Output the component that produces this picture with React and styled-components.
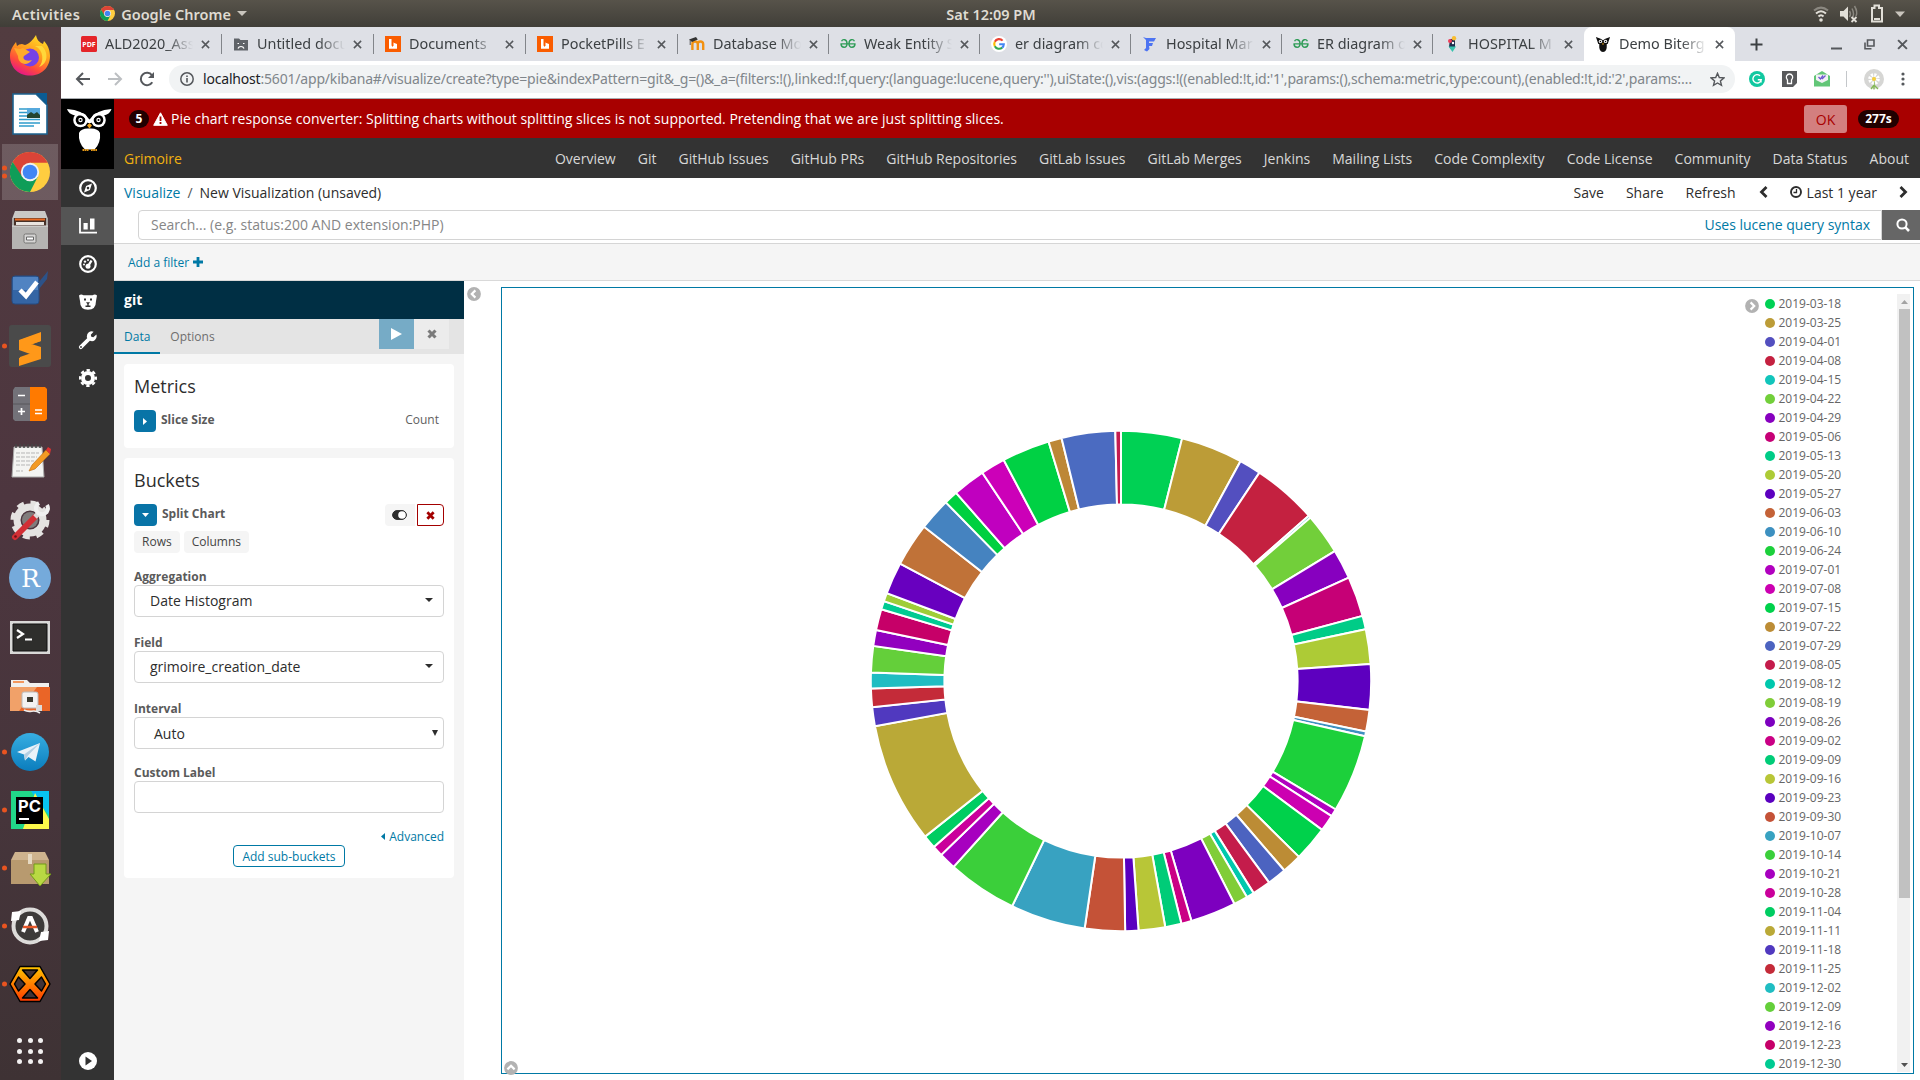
import React from "react";
import styled, { createGlobalStyle } from "styled-components";

const Global = createGlobalStyle`
  * { box-sizing: border-box; }
  body { margin: 0; overflow: hidden; background: #fff; }
  svg { display: block; flex: none; }
`;

const PAGE_FONT = '"Open Sans", "Noto Sans", sans-serif';
const SHELL_FONT = '"Noto Sans", "Open Sans", sans-serif';

/* ---------- desktop shell ---------- */

const Desktop = styled.div`
  width: 1920px; height: 1080px; overflow: hidden;
  display: flex; flex-direction: column;
  font-family: ${PAGE_FONT}; font-size: 14px; color: #2d2d2d;
`;
const TopBar = styled.header`
  flex: none; height: 27px; padding: 0 7px 0 12px;
  display: grid; grid-template-columns: 1fr auto 1fr; align-items: center;
  background: linear-gradient(#57534a, #403e38);
  font: 600 14.5px/26px ${SHELL_FONT}; color: #dfdbd2;
`;
const TopLeft = styled.div`display: flex; align-items: center;`;
const Activities = styled.span`letter-spacing: 0.35px;`;
const AppMenu = styled.div`display: flex; align-items: center; gap: 6px; margin-left: 20px;`;
const TopRight = styled.div`display: flex; align-items: center; justify-content: flex-end;`;
const Clock = styled.div`padding-left: 57px;`;
const Body = styled.div`flex: 1; display: flex; min-height: 0;`;

const Dock = styled.aside`
  width: 61px; flex: none; display: flex; flex-direction: column;
  background: linear-gradient(#523c40, #4d363f 45%, #46353b 75%, #3e3234);
`;
const DockSlot = styled.div`
  height: 58px; flex: none; display: grid; grid-template-columns: 60px; align-items: center; justify-items: center;
  background: ${(p) => (p.$active ? "linear-gradient(rgba(255,255,255,.17), rgba(255,255,255,.17)) 2px 1px / 56px 56px no-repeat" : "none")};
  position: relative;
`;
const Running = styled.span`
  position: absolute; left: 2px; top: 50%; display: flex; flex-direction: column; gap: 3px; transform: translateY(-50%);
  &::before, &::after { content: ""; width: 5px; height: 5px; border-radius: 50%; background: #e95420; }
  &::after { display: ${(p) => (p.$two ? "block" : "none")}; }
`;
const DockGrid = styled.div`
  margin: auto 0 16px 17px; width: 26px; display: grid; grid-template-columns: repeat(3, 5px); gap: 5.5px;
  i { width: 5px; height: 5px; border-radius: 50%; background: #f2f0f0; }
`;

/* ---------- browser chrome ---------- */

const Browser = styled.section`flex: 1; min-width: 0; display: flex; flex-direction: column;`;
const TabStrip = styled.div`
  height: 34px; flex: none; display: flex; align-items: center; padding-left: 9px; background: #dee0e6;
`;
const Tab = styled.div`
  width: ${(p) => p.$w}px; height: 34px; flex: none; padding: 0 0 0 11px; display: flex; align-items: center;
  background: ${(p) => (p.$active ? "#fff" : "transparent")}; border-radius: 8px 8px 0 0;
`;
const TabTitle = styled.span`
  width: 89px; margin: 0 7px 0 8px; white-space: nowrap; color: #3c4043;
  font: 14.4px/20px ${SHELL_FONT};
  mask-image: linear-gradient(90deg, #000 62px, transparent 88px);
`;
const TabSep = styled.i`
  width: 1px; height: 20px; margin-left: auto; background: ${(p) => (p.$on ? "#82858a" : "transparent")};
`;
const WindowButtons = styled.div`margin-left: auto; margin-right: 12px; display: flex; align-items: center; gap: 22px;`;
const NewTab = styled.div`margin-left: 15px;`;
const Toolbar = styled.div`
  height: 38px; flex: none; padding: 0 15px 1px 14px; display: flex; align-items: center; background: #fff; border-bottom: 1px solid #a9adb1;
`;
const NavIcons = styled.div`display: flex; align-items: center; gap: 16px; width: 94px;`;
const Omnibox = styled.div`
  width: 1566px; height: 28px; border-radius: 14px; background: #f1f3f4;
  display: flex; align-items: center; padding: 0 10px 0 11px;
`;
const Url = styled.div`
  flex: 1; margin-left: 9px; white-space: nowrap; overflow: hidden; color: #80868b; font: 14px/20px ${SHELL_FONT};
  letter-spacing: -0.187px;
  b { font-weight: 400; color: #202124; }
`;
const Extensions = styled.div`display: flex; align-items: center; flex: 1; justify-content: space-between; margin-left: 14px;`;
const Bar = styled.i`width: 1px; height: 16px; background: #c4c7ca;`;

/* ---------- kibana ---------- */

const Kibana = styled.main`flex: 1; min-height: 0; display: flex;`;
const Rail = styled.nav`width: 53px; flex: none; display: flex; flex-direction: column; background: #333;`;
const Logo = styled.div`height: 70px; background: #000;`;
const RailItem = styled.div`
  height: 38px; display: grid; place-items: center; background: ${(p) => (p.$active ? "#555" : "transparent")};
`;
const RailFoot = styled.div`margin: auto 0 10px; display: grid; place-items: center;`;
const Page = styled.div`flex: 1; min-width: 0; display: flex; flex-direction: column; background: #fff;`;

const Notice = styled.div`
  height: 39px; flex: none; display: flex; align-items: center; padding: 0 21px 0 15px; background: #a80000; color: #fff;
`;
const Pill = styled.span`
  height: 18px; width: ${(p) => p.$w}px; border-radius: 9px; background: #210000; color: #fff;
  font: 700 12px/18px ${PAGE_FONT}; text-align: center;
`;
const Alert = styled.span`margin-left: 4px;`;
const NoticeText = styled.span`margin: 0 auto 0 3px; line-height: 20px;`;
const OkButton = styled.span`
  width: 43px; height: 28px; margin-right: 11px; border-radius: 3px; background: #d37f7f; color: #a80000; text-align: center; line-height: 29px;
`;
const Menu = styled.div`
  height: 40px; flex: none; display: flex; align-items: center; padding: 1px 11px 0 10px; background: #333; color: #d8d8d8;
`;
const Brand = styled.span`margin-right: auto; color: #f0b010;`;
const MenuItems = styled.div`display: flex; gap: 22.05px;`;
const Crumbs = styled.div`height: 32px; flex: none; padding: 0 11px 4px 10px; display: flex; align-items: center;`;
const Link = styled.span`color: #0079a5;`;
const Slash = styled.span`margin: 0 7px; color: #555;`;
const Actions = styled.div`margin-left: auto; display: flex; align-items: center;`;
const Action = styled.span`margin-right: 22px;`;
const SearchRow = styled.div`height: 34px; flex: none; padding-left: 24px; display: flex; border-bottom: 1px solid #d6d6d6;`;
const SearchBox = styled.div`
  flex: 1; height: 30px; padding: 0 11px 1px 12px; display: flex; align-items: center; justify-content: space-between;
  border: 1px solid #d4d4d4; border-radius: 4px 0 0 4px; color: #868686;
`;
const SearchButton = styled.div`width: 38px; height: 30px; display: grid; place-items: center; background: #666; padding-left: 3px;`;
const FilterBar = styled.div`
  height: 37px; flex: none; padding-left: 14px; display: flex; align-items: center; gap: 4px; background: #f5f5f5;
  border-bottom: 1px solid #d9d9d9; font-size: 12px; color: #0079a5;
`;
const Work = styled.div`flex: 1; min-height: 0; display: flex;`;

const Editor = styled.aside`width: 350px; flex: none; background: #f5f5f5; font-size: 12px;`;
const IndexName = styled.div`height: 38px; padding-left: 10px; background: #002f44; color: #fff; font: 700 14px/37px ${PAGE_FONT};`;
const EditorTabs = styled.div`height: 35px; display: flex; background: #e4e4e4; padding-right: 15px;`;
const EditorTab = styled.div`
  height: 35px; padding: 0 10px; line-height: 35px; color: ${(p) => (p.$active ? "#0079a5" : "#6e6e6e")};
  border-bottom: 2px solid ${(p) => (p.$active ? "#0079a5" : "transparent")};
`;
const TabButton = styled.div`
  width: 35px; height: 30px; display: grid; place-items: center; background: ${(p) => (p.$primary ? "#76abc6" : "#ececec")};
  margin-left: ${(p) => (p.$primary ? "auto" : "0")};
`;
const Card = styled.section`
  margin: 10px 10px 0; height: ${(p) => p.$h}px; padding: 10px 10px 0; background: #fff; border-radius: 4px;
`;
const CardTitle = styled.h2`margin: 0 0 11px; font: 400 18px/25px ${PAGE_FONT}; color: #2d2d2d;`;
const AggRow = styled.div`display: flex; align-items: center; height: 22px; line-height: 16px;`;
const Expander = styled.span`width: ${(p) => p.$w}px; height: 22px; display: grid; place-items: center; border-radius: 4px; background: #0874a7;`;
const AggName = styled.b`margin: 0 auto 0 5px; padding-bottom: 2px; color: #5a5a5a;`;
const AggValue = styled.span`margin-right: 5px; padding-bottom: 2px; color: #5f5f5f;`;
const MiniButton = styled.span`
  width: ${(p) => p.$w}px; height: 22px; display: grid; place-items: center; border-radius: ${(p) => (p.$danger ? "0 4px 4px 0" : "4px 0 0 4px")};
  background: ${(p) => (p.$danger ? "#fff" : "#f5f5f5")}; border: ${(p) => (p.$danger ? "1px solid #a30000" : "0")};
  margin-left: ${(p) => (p.$danger ? "2px" : "0")}; padding-right: ${(p) => (p.$danger ? 0 : 2)}px;
`;
const Chips = styled.div`display: flex; gap: 4px; margin-top: 5px;`;
const Chip = styled.span`height: 22px; padding: 0 8px; border-radius: 4px; background: #f5f5f5; line-height: 21px; color: #444;`;
const FieldLabel = styled.label`display: block; margin-top: ${(p) => p.$top}px; height: 17px; font-weight: 700; line-height: 17px; color: #5a5a5a;`;
const Control = styled.div`
  height: 32px; padding: 0 ${(p) => (p.$native ? 5 : 10)}px ${(p) => (p.$native ? 0 : 2)}px ${(p) => (p.$native ? 19 : 15)}px;
  display: flex; align-items: center; justify-content: space-between; border: 1px solid #d4d4d4; border-radius: 4px; font-size: 14px;
`;
const Advanced = styled.div`height: 18px; margin-top: 14px; display: flex; align-items: center; justify-content: flex-end; gap: 4px; color: #0079a5;`;
const SubButton = styled.div`width: 112px; height: 22px; margin: 0 auto; border: 1px solid #0079a5; border-radius: 4px; color: #0079a5; text-align: center; line-height: 22px;`;

const Gutter = styled.div`width: 37px; flex: none; padding: 6px 0 0 3px;`;
const Canvas = styled.section`
  flex: 1; margin: 6px 6px 6px 0; border: 1px solid #0079a5; display: flex; min-width: 0; position: relative;
`;
const ChartArea = styled.div`flex: 1; min-width: 0; display: flex; align-items: center; justify-content: center; padding: 0 5px 0 0;`;
const SpyToggle = styled.div`position: absolute; left: 2px; bottom: -2px;`;
const LegendToggle = styled.div`width: 14px; margin-top: 11px;`;
const Legend = styled.ul`
  width: 132px; height: 779px; margin: 6px 0 0 6px; padding: 0; list-style: none; font-size: 12px; color: #666;
`;
const LegendRow = styled.li`
  height: 19px; display: flex; align-items: center; gap: 3.5px; line-height: 19px;
  &::before { content: ""; width: 10px; height: 10px; border-radius: 50%; background: ${(p) => p.$color}; }
`;
const Scrollbar = styled.div`width: 13px; height: 778px; margin: 6px 3px 0 0; background: #f1f1f1; display: flex; flex-direction: column; align-items: center;`;
const Thumb = styled.div`width: 11px; margin: 0 0 0 2px; height: 589px; background: #c1c1c1;`;
const ScrollArrow = styled.div`height: 15px; display: grid; place-items: center; margin-top: ${(p) => (p.$end ? "auto" : 0)}; padding-left: 2px;`;

/* ---------- data ---------- */

const LEGEND = [
  ["2019-03-18", "#00d154"], ["2019-03-25", "#bc9c37"], ["2019-04-01", "#534fbf"], ["2019-04-08", "#c42140"],
  ["2019-04-15", "#12c5bb"], ["2019-04-22", "#72cf3a"], ["2019-04-29", "#8700bf"], ["2019-05-06", "#c60076"],
  ["2019-05-13", "#00cc87"], ["2019-05-20", "#adcb36"], ["2019-05-27", "#5d00bf"], ["2019-06-03", "#c46237"],
  ["2019-06-10", "#3d90c0"], ["2019-06-24", "#1cd03b"], ["2019-07-01", "#b100bf"], ["2019-07-08", "#cc00b1"],
  ["2019-07-15", "#00d14b"], ["2019-07-22", "#bc8c35"], ["2019-07-29", "#4c63c0"], ["2019-08-05", "#c41c4b"],
  ["2019-08-12", "#00c8ad"], ["2019-08-19", "#80cd38"], ["2019-08-26", "#7d00bf"], ["2019-09-02", "#ca0085"],
  ["2019-09-09", "#00cc78"], ["2019-09-16", "#b8c637"], ["2019-09-23", "#5a00bf"], ["2019-09-30", "#c45237"],
  ["2019-10-07", "#38a2c1"], ["2019-10-14", "#3bcf3a"], ["2019-10-21", "#a700bf"], ["2019-10-28", "#ca009b"],
  ["2019-11-04", "#00cd62"], ["2019-11-11", "#baa937"], ["2019-11-18", "#5039bf"], ["2019-11-25", "#c42b39"],
  ["2019-12-02", "#20bdc2"], ["2019-12-09", "#64cf3a"], ["2019-12-16", "#9200bf"], ["2019-12-23", "#c60068"],
  ["2019-12-30", "#00cb92"],
];
const LATER_COLORS = ["#9fcd38", "#6800bf", "#c07238", "#4583c0", "#00d03f", "#c000bf", "#cc00b8", "#00d144", "#bd8737", "#4b6bc1", "#c41c50"];
const SLICE_ENDS = [
  14.14, 28.53, 33.59, 48.64, 49.23, 58.71, 65.58, 74.91, 78.07, 86.12, 96.64, 101.67, 102.78, 120.9, 122.7, 126.51,
  134.67, 139.24, 143.7, 147.98, 149.77, 153.04, 163.65, 166.03, 169.8, 175.98, 179.04, 188.36, 205.8, 222, 225.95,
  228.44, 231.54, 259.6, 264, 268.28, 271.95, 278.07, 281.78, 286.66, 288.62, 290.57, 298, 308.08, 315.57, 318.77,
  326.35, 332.05, 343.17, 346.25, 358.7, 360,
];
const COLORS = [...LEGEND.map((l) => l[1]), ...LATER_COLORS];
const MENU = ["Overview", "Git", "GitHub Issues", "GitHub PRs", "GitHub Repositories", "GitLab Issues", "GitLab Merges", "Jenkins", "Mailing Lists", "Code Complexity", "Code License", "Community", "Data Status", "About"];

function Donut({ outer = 250.2, inner = 176.6 }) {
  const at = (deg, r) => {
    const a = (deg * Math.PI) / 180;
    return `${(Math.sin(a) * r).toFixed(2)} ${(-Math.cos(a) * r).toFixed(2)}`;
  };
  return (
    <svg width="502" height="502" viewBox="-251 -251 502 502">
      {SLICE_ENDS.map((end, i) => {
        const start = i ? SLICE_ENDS[i - 1] : 0;
        return (
          <path key={end} fill={COLORS[i]} stroke="#fff" strokeWidth="2"
            d={`M${at(start, outer)}A${outer} ${outer} 0 0 1 ${at(end, outer)}L${at(end, inner)}A${inner} ${inner} 0 0 0 ${at(start, inner)}Z`} />
        );
      })}
    </svg>
  );
}

/* ---------- icons ---------- */

const Chrome = ({ s }) => (
  <svg width={s} height={s} viewBox="0 0 48 48">
    <circle cx="24" cy="24" r="24" fill="#ffcd40" />
    <path d="M24 13H45.300A24 24 0 0 0 3.200 12L14 31Z" fill="#db4437" />
    <path d="M3.200 12 14.500 29.500 24 35 33.500 29.500 24 48A24 24 0 0 1 3.200 12Z" fill="#0f9d58" />
    <circle cx="24" cy="24" r="11" fill="#f1f1f1" /><circle cx="24" cy="24" r="8.800" fill="#4285f4" />
  </svg>
);
const Cross = ({ s = 9, c = "#55585c", w = 1.7 }) => (
  <svg width={s} height={s} viewBox="0 0 10 10"><path d="M1 1 9 9M9 1 1 9" stroke={c} strokeWidth={w} fill="none" /></svg>
);
const FatCross = ({ s, c }) => (
  <svg width={s} height={s} viewBox="0 0 10 10"><path d="M1.500 1.500 8.500 8.500M8.500 1.500 1.500 8.500" stroke={c} strokeWidth="3.100" fill="none" /></svg>
);
const Caret = ({ d = "down", w = 8, h = 4, c = "#2d2d2d" }) => (
  <svg width={w} height={h} viewBox="0 0 10 10" preserveAspectRatio="none">
    <path fill={c} d={{ down: "M0 0H10L5 10Z", up: "M0 10H10L5 0Z", left: "M10 0V10L0 5Z", right: "M0 0V10L10 5Z" }[d]} />
  </svg>
);
const CircleArrow = ({ turn = 0 }) => (
  <svg width="14" height="14" viewBox="0 0 14 14">
    <circle cx="7" cy="7" r="6.900" fill="#b2b2b2" />
    <path d="M8.400 3.400 4.800 7 8.400 10.600" transform={`rotate(${turn} 7 7)`} stroke="#fff" strokeWidth="2.200" fill="none" />
  </svg>
);
const Geeks = () => (
  <svg width="16" height="16" viewBox="0 0 16 16" fill="none" stroke="#2f9c57" strokeWidth="1.400">
    <path d="M.4 7.900H15.600M1.600 5.200C2.600 2.800 7 3.100 7 7.400 7 12.600 1.200 12.200 1 7.900M14.400 5.200C13.400 2.800 9 3.100 9 7.400 9 12.600 14.800 12.200 15 7.900" />
  </svg>
);
const Lucid = () => (
  <svg width="16" height="16" viewBox="0 0 16 16"><path fill="#fa5d00" d="M0 0H16V16H0Z" /><path fill="#fff" d="M4 3H6.500V9.500L8 11V6.500L12 8V12.800H4Z" /><path d="M8 6.500V10" stroke="#fa5d00" /></svg>
);
const TAB_ICONS = {
  pdf: <svg width="16" height="16" viewBox="0 0 16 16"><rect width="16" height="16" rx="1.500" fill="#e5252a" /><text x="8" y="10.600" fontSize="7" fontWeight="700" fill="#fff" textAnchor="middle" fontFamily="Open Sans">PDF</text></svg>,
  sad: <svg width="16" height="16" viewBox="0 0 16 16"><path d="M1 2.500H6L7.500 4H15V14.500H1Z" fill="#5f6368" /><path d="M4.500 7.500H6M10 7.500H11.500M5 12.500C6 9.800 10 9.800 11 12.500" stroke="#fff" strokeWidth="1.200" fill="none" /></svg>,
  lucid: <Lucid />,
  moodle: <svg width="16" height="16" viewBox="0 0 16 16"><path d="M3.400 14V8Q3.400 5.500 6 5.500T8.800 8V14M8.800 8Q8.800 5.500 11.400 5.500T14.200 8V14" stroke="#f29111" strokeWidth="2.400" fill="none" /><path d="M0 3.500 7 1 8.800 3.500 3 6Z" fill="#333" /><path d="M1.200 4V9" stroke="#555" /></svg>,
  geeks: <Geeks />,
  google: <svg width="16" height="16" viewBox="0 0 16 16"><circle cx="8" cy="8" r="8" fill="#fff" /><g fill="none" strokeWidth="2.100"><path d="M11.600 4.600A4.800 4.800 0 0 0 3.800 5.800" stroke="#ea4335" /><path d="M3.800 5.800A4.800 4.800 0 0 0 3.800 10.200" stroke="#fbbc05" /><path d="M3.800 10.200A4.800 4.800 0 0 0 11.200 11.600" stroke="#34a853" /><path d="M11.200 11.600A4.800 4.800 0 0 0 12.800 8.200H8.200" stroke="#4285f4" /></g></svg>,
  freelance: <svg width="16" height="16" viewBox="0 0 16 16"><path d="M1 1 4 2H14L12 5.500H7V7H11L10 10H7L7.500 13 5 15.500 2 14 4 12V4Z" fill="#4d74f2" /></svg>,
  rocket: <svg width="16" height="16" viewBox="0 0 16 16"><path d="M6 3H11V11L8.500 14 5 11Z" fill="#1d2c4d" /><circle cx="10" cy="2.200" r="2.200" fill="#f9bd30" /><circle cx="6" cy="5" r="2" fill="#ee3c57" /><path d="M4.500 10.500H12L8.500 16Z" fill="#37c3ad" /><circle cx="9" cy="7" r="1.200" fill="#fff" /></svg>,
  owl: <svg width="16" height="17" viewBox="0 0 17 17"><path d="M1 .5 6 2.500 8.500 4 11 2.500 16 .5 13.500 8H3.500Z" fill="#111" /><path d="M4.500 8H12.500Q13 16.500 8.500 16.500T4.500 8Z" fill="#111" /><circle cx="5.800" cy="5.200" r="1.800" fill="#fff" /><circle cx="11.200" cy="5.200" r="1.800" fill="#fff" /><circle cx="5.800" cy="5.200" r=".8" /><circle cx="11.200" cy="5.200" r=".8" /><path d="M8.500 6.500 9.500 8.500H7.500Z" fill="#f0a818" /></svg>,
};
const TABS = [
  ["pdf", "ALD2020_Ass"], ["sad", "Untitled docu"], ["lucid", "Documents"], ["lucid", "PocketPills E"], ["moodle", "Database Mo"],
  ["geeks", "Weak Entity S"], ["google", "er diagram co"], ["freelance", "Hospital Mar"], ["geeks", "ER diagram o"], ["rocket", "HOSPITAL M"], ["owl", "Demo Biterg"],
];

const D = ({ children, w = 42, h = 42 }) => <svg width={w} height={h} viewBox={`0 0 ${w} ${h}`}>{children}</svg>;
const DOCK = [
  { icon: <D w={40} h={42}><defs><linearGradient id="fx" x1=".8" y1="0" x2=".3" y2="1"><stop offset="0" stopColor="#ffe226" /><stop offset=".45" stopColor="#ff9a1e" /><stop offset=".75" stopColor="#ff4a3c" /><stop offset="1" stopColor="#e3148c" /></linearGradient></defs>
    <path fill="url(#fx)" d="M26 0C27 5 29 7 33 9L34 6C39 11 40 17 40 21 40 33 31 40.500 20 40.500 9 40.500 0 33 0 21 0 15 3 11 6 7L7 11Q9 9 12 9L15 10C19 9 23 5 26 0Z" /><circle cx="20" cy="22.500" r="9" fill="#7542e5" /><path d="M4 13 10 14 13 13 20 17 14 21C12 24 16 27 22 25 17 32 8 29 8 21Z" fill="#ffab2b" /><path d="M25 11C34 15 34 27 29 32 39 28 38 17 32 11Z" fill="#ffd83a" /></D> },
  { icon: <D><path d="M4 1H27L38 12V41H4Z" fill="#fff" stroke="#1c6390" strokeWidth="1.600" /><path d="M27 0H38V12Z" fill="#0b5c93" /><path d="M10 16H18M10 19.500H18M10 23H18M10 26.500H31M10 30H31M10 33H25" stroke="#2f9ccb" strokeWidth="1.600" /><path d="M18 15H31V25H18Z" fill="#56a9dd" /><path d="M18 25V22L22 19 25 21 28 19 31 22V25Z" fill="#23442e" /></D> },
  { icon: <Chrome s={40} />, active: true, run: 2 },
  { icon: <D><path d="M6 2H36L39 10H3Z" fill="#c9c8c6" /><path d="M3 9H39V40H3Z" fill="#aaa9a7" /><path d="M5 9H37V18H5Z" fill="#463128" /><path d="M6 10.500H36" stroke="#eb6c26" strokeWidth="2" /><path d="M7 14.500H35" stroke="#e9e4df" strokeWidth="3" /><path d="M3 17H39V40H3Z" fill="#b5b4b2" /><path d="M3 17H39" stroke="#dedddc" /><rect x="15" y="25" width="12" height="9" rx="1.500" fill="#d6d5d4" stroke="#757472" /><path d="M17.500 28H24.500V31H17.500Z" fill="#fff" stroke="#666" /></D> },
  { icon: <D><rect x="3" y="9" width="27" height="28" rx="3" fill="#3465a4" stroke="#254d83" /><path d="M4 10H29V23H4Z" fill="#5083c2" /><path d="M29 16 39 4 38 12 30 22Z" fill="#2c5288" /><path d="M11 23 17 29 28 15" stroke="#fff" strokeWidth="4.500" fill="none" /></D> },
  { icon: <D><rect width="42" height="42" rx="3" fill="#4a4a4a" /><path d="M11 15 32 8V16L20 20.500 32 25V33L11 35V32L24 27.500 11 23.500Z" fill="#ff9819" /><path d="M10 15 32 7V16L10 23ZM10 23 32 29V34L24 30 10 25ZM10 33 32 26V34L10 41ZM10 15 32 22V29L10 23Z" fill="#ff9819" /></D>, run: 1 },
  { icon: <D><path d="M4 7 6 4H21V38H6L4 36Z" fill="#737279" /><path d="M21 4H36L38 6V36L36 38H21Z" fill="#ff7a00" /><path d="M4 21H21" stroke="#58575c" /><path d="M9 12.500H16M9 28.500H16M12.500 25V32M26 27H33M26 30.500H33" stroke="#fff" strokeWidth="1.700" /></D> },
  { icon: <D><path d="M5 6H33L35 36H3Z" fill="#f4f4f2" stroke="#aaa" /><path d="M7 7V3M11 7V3M15 7V3M19 7V3M23 7V3M27 7V3M31 7V3" stroke="#444" strokeWidth="1.500" /><path d="M7 12H30M7 16H28M7 20H25M7 24H22M7 30H14" stroke="#b5b5b5" strokeDasharray="4 1" /><path d="M20 30 23 24 37 9 41 13 26 28Z" fill="#f39a24" stroke="#b86a12" strokeWidth=".6" /><path d="M37 9 39 6 42 8 41 13Z" fill="#d33" /></D> },
  { icon: <D><circle cx="21" cy="21" r="13" fill="none" stroke="#e4e3e1" strokeWidth="7" /><circle cx="21" cy="21" r="17.500" fill="none" stroke="#e4e3e1" strokeWidth="4" strokeDasharray="7 6.740" /><circle cx="21" cy="21" r="8" fill="#807c7c" /><path d="M6 38 26 18" stroke="#d22f35" strokeWidth="6" strokeLinecap="round" /><path d="M26 18 30 14" stroke="#ddd" strokeWidth="5" /><path d="M38 6A6 6 0 1 1 30 4" fill="none" stroke="#f0f0f0" strokeWidth="4" /><circle cx="6.500" cy="37.500" r="1.300" fill="#701015" /></D> },
  { icon: <D><circle cx="21" cy="21" r="21" fill="#75aadb" /><text x="21.500" y="29.500" fontFamily="DejaVu Serif, Liberation Serif" fontSize="25" fill="#fff" textAnchor="middle">R</text></D> },
  { icon: <D h={40}><path d="M1 5H41V38H1Z" fill="#d9d9d8" /><path d="M4 8H38V35H4Z" fill="#2e2e2c" stroke="#111" /><path d="M8 14 14 18 8 22M16 23.500H23" stroke="#fff" strokeWidth="2.200" fill="none" /></D> },
  { icon: <D h={40}><path d="M2 6H18L21 9H40V16H2Z" fill="#f1f0ee" /><path d="M4 8H15" stroke="#f37a2c" strokeWidth="1.500" /><path d="M1 13H41V37H1Z" fill="#ea6527" /><path d="M1 13H28L10 37H1Z" fill="#f1a169" /><rect x="13" y="18" width="16" height="16" rx="2" fill="#f3f2f1" stroke="#bbb" /><path d="M18 23H24V28H18Z" fill="#3b3a30" /><path d="M15 36C22 40 24 34 31 39" stroke="#eee" fill="none" strokeWidth="1.600" /><path d="M27 31H33V37H27Z" fill="#dcdcdc" /></D> },
  { icon: <D w={38} h={38}><defs><linearGradient id="tg" x2="0" y2="1"><stop stopColor="#37aee2" /><stop offset="1" stopColor="#0b7dbd" /></linearGradient></defs><circle cx="19" cy="19" r="19" fill="url(#tg)" /><path d="M6 19 29 10 24.500 28.500 17.500 24 14 27.500 13 21.500Z" fill="#e9f2f9" /><path d="M13 21.500 29 10 17 22.500 14 27.500Z" fill="#b4cfe2" /></D>, run: 1 },
  { icon: <D w={38} h={38}><path d="M0 0H38V38H0Z" fill="#21d789" /><path d="M20 0H38V24L26 10Z" fill="#07c3f2" /><path d="M12 38 24 2 38 28V38Z" fill="#fcf84a" /><path d="M5 6H32V33H5Z" fill="#000" /><text x="18.500" y="21" fontSize="16.500" fontWeight="700" fill="#fff" fontFamily="Inter, Open Sans" textAnchor="middle">PC</text><path d="M8 28H18" stroke="#fff" strokeWidth="2" /></D>, run: 1 },
  { icon: <D h={40}><path d="M6 4H36L40 12H2Z" fill="#ceb38e" /><path d="M2 12H40V36H2Z" fill="#b89a6f" /><path d="M19 6H23V16H19Z" fill="#e6d9c2" /><path d="M25 16H37V26H42L31 38 21 26H25Z" fill="#b9d943" stroke="#739b18" /></D>, run: 1 },
  { icon: <D><circle cx="21" cy="21" r="16.500" fill="#3d3b3a" stroke="#dddcda" strokeWidth="4" /><path d="M3 7 12 6 10 15 2 16ZM39 35 30 36 32 27 40 26Z" fill="#fff" /><path d="M14 27 20 13H22L28 27" stroke="#fff" strokeWidth="4" fill="none" /><path d="M14 22H28" stroke="#e7582a" strokeWidth="2.500" /></D>, run: 1 },
  { icon: <D><defs><linearGradient id="hx" x2="0" y2="1"><stop stopColor="#ffc500" /><stop offset="1" stopColor="#ff3a00" /></linearGradient></defs><path fillRule="evenodd" d="M11 3.500H31L41 21 31 38.500H11L1 21ZM13.500 7 21 15.500 28.500 7ZM13.500 35 21 26.500 28.500 35ZM5.500 21 9.500 14 16 21 9.500 28ZM36.500 21 32.500 14 26 21 32.500 28Z" fill="url(#hx)" stroke="#000" strokeWidth="1.500" strokeLinejoin="round" /></D>, run: 1 },
];

const RAIL = [
  <svg width="18" height="18" viewBox="0 0 18 18"><circle cx="9" cy="9" r="7.800" fill="none" stroke="#fff" strokeWidth="2.200" /><path fillRule="evenodd" d="M13 4.500 10.900 11 5 13.500 7.100 7ZM9 7.800A1.300 1.300 0 1 0 9 10.400 1.300 1.300 0 0 0 9 7.800Z" fill="#fff" /></svg>,
  <svg width="18" height="18" viewBox="0 0 18 18"><path d="M1 1V15.700H18" stroke="#fff" strokeWidth="1.800" fill="none" /><path d="M4.500 6H8.700V12.500H4.500ZM11 1.500H15.500V12.500H11Z" fill="#fff" /></svg>,
  <svg width="18" height="18" viewBox="0 0 18 18"><circle cx="9" cy="9" r="7.800" fill="none" stroke="#fff" strokeWidth="2.200" /><circle cx="9" cy="11.200" r="2.500" fill="#fff" /><path d="M9.500 10.500 12.500 5.500" stroke="#fff" strokeWidth="2.400" /><circle cx="6" cy="6.600" r="1.200" fill="#fff" /><circle cx="9" cy="5" r="1" fill="#fff" /><circle cx="5" cy="9.600" r="1" fill="#fff" /></svg>,
  <svg width="18" height="16" viewBox="0 0 18 16"><path fill="#fff" d="M0 1.500Q2-.3 4.500 1.300H13.500Q16-.3 18 1.500L17 7Q17 15.800 9 15.800T1 7Z" /><path d="M5 4.600H7V6.500H5ZM11 4.600H13V6.500H11ZM7 8.300H11L9.700 10V11.500H11.500V13H6.500V11.500H8.300V10Z" fill="#333" /></svg>,
  <svg width="19" height="19" viewBox="0 0 19 19"><path d="M2.800 16.200 11.500 7.500" stroke="#fff" strokeWidth="3.800" strokeLinecap="round" /><path fill="#fff" d="M15.600.7 12.800 3.700 13.300 5.700 15.300 6.200 18.400 3.500Q19.300 7 17 9T12 9.800L8.900 6.600Q8.500 3 10.800 1.300T15.600.7Z" /><circle cx="3" cy="16" r=".9" fill="#333" /></svg>,
  <svg width="18" height="18" viewBox="0 0 18 18"><circle cx="9" cy="9" r="5" fill="none" stroke="#fff" strokeWidth="4" /><circle cx="9" cy="9" r="7.900" fill="none" stroke="#fff" strokeWidth="2.200" strokeDasharray="3.400 2.800" strokeDashoffset="1.700" /></svg>,
];

const Owl = () => (
  <svg width="53" height="70" viewBox="0 0 53 70">
    <path fill="#fff" d="M18 34Q20 29 28.500 29.500 37 29 39 34 40 44 33.500 50.500H24Q17 44 18 34Z" />
    <circle cx="19.500" cy="21" r="7.300" fill="#fff" /><circle cx="37.500" cy="21" r="7.300" fill="#fff" />
    <circle cx="19.500" cy="21" r="4.800" fill="#000" /><circle cx="37.500" cy="21" r="4.800" fill="#000" />
    <circle cx="19.500" cy="21" r="2.200" fill="#fff" /><circle cx="37.500" cy="21" r="2.200" fill="#fff" />
    <circle cx="19.500" cy="21" r="1" fill="#000" /><circle cx="37.500" cy="21" r="1" fill="#000" />
    <path fill="#fff" d="M6 10Q22 11 28.500 20.500 35 11 50.500 10 49 15 43 16.500 34 14 30.500 24H26.500Q23 14 14 16.500 7.500 15 6 10Z" />
    <path fill="#f0a21c" d="M28.500 24 31 26.500 28.500 29.500 26 26.500Z" />
    <path stroke="#e79a16" strokeWidth="2" strokeDasharray="1.700 .5" d="M21.500 51H27.500M30 51H36" />
  </svg>
);

export default function App() {
  return (
    <Desktop>
      <Global />
      <TopBar>
        <TopLeft>
          <Activities>Activities</Activities>
          <AppMenu><Chrome s={15} /><span>Google Chrome</span><Caret w={10} h={5} c="#c9c5bd" /></AppMenu>
        </TopLeft>
        <Clock>Sat 12:09 PM</Clock>
        <TopRight>
          <svg width="100" height="20" viewBox="0 0 100 20" fill="none" stroke="#e2dfd8">
            <path d="M1 6.500Q8 .8 15 6.500" stroke="#8b8880" strokeWidth="2" /><path d="M3 9.500Q8 5 13 9.500M5.500 12.500Q8 9.800 10.500 12.500" strokeWidth="2" /><circle cx="8" cy="16" r="1.800" fill="#e2dfd8" stroke="none" />
            <path d="M27 7H30.500L35 2.500V17L30.500 12.500H27Z" fill="#e2dfd8" stroke="none" /><path d="M36.500 7Q38.500 10 36.500 13M39 4.500Q42 10 39 14.500M41.500 2Q45 8 43 12" stroke="#8b8880" strokeWidth="1.500" /><path d="M38.500 13 43.500 18M43.500 13 38.500 18" strokeWidth="1.800" />
            <path d="M59 4H61.500V1.500H66V4H69V17.500H59Z" strokeWidth="2" /><path d="M61 15H67" strokeWidth="2" />
            <path d="M82 7.500H92L87 13Z" fill="#c9c5bd" stroke="none" />
          </svg>
        </TopRight>
      </TopBar>
      <Body>
        <Dock>
          {DOCK.map((d, i) => (
            <DockSlot key={i} $active={d.active}>{d.icon}{d.run && <Running $two={d.run === 2} />}</DockSlot>
          ))}
          <DockGrid>{Array.from({ length: 9 }, (_, i) => <i key={i} />)}</DockGrid>
        </Dock>
        <Browser>
          <TabStrip>
            {TABS.map(([icon, title], i) => (
              <Tab key={title} $w={i < 4 ? 152 : 151} $active={i === 10}>
                {TAB_ICONS[icon]}<TabTitle>{title}</TabTitle><Cross /><TabSep $on={i < 9} />
              </Tab>
            ))}
            <NewTab><svg width="13" height="13" viewBox="0 0 13 13"><path d="M6.500 .5V12.500M.5 6.500H12.500" stroke="#3c4043" strokeWidth="2" /></svg></NewTab>
            <WindowButtons>
              <svg width="11" height="12" viewBox="0 0 11 12"><path d="M0 10.500H11" stroke="#55585c" strokeWidth="2" /></svg>
              <svg width="11" height="11" viewBox="0 0 11 11" fill="none" stroke="#55585c" strokeWidth="1.600"><path d="M3.500 1H10V7H3.500ZM1 3.500V9.800H7.500" /></svg>
              <Cross s={11} w={1.8} />
            </WindowButtons>
          </TabStrip>
          <Toolbar>
            <NavIcons>
              <svg width="16" height="16" viewBox="0 0 16 16" fill="none" stroke="#55585c" strokeWidth="2"><path d="M15 8H2.500M8 2 2 8 8 14" /></svg>
              <svg width="16" height="16" viewBox="0 0 16 16" fill="none" stroke="#bcbfc2" strokeWidth="2"><path d="M1 8H13.500M8 2 14 8 8 14" /></svg>
              <svg width="16" height="16" viewBox="0 0 16 16"><path d="M13.300 11.300A6.200 6.200 0 1 1 13 4.300" fill="none" stroke="#55585c" strokeWidth="2" /><path d="M15 1V7H9Z" fill="#55585c" /></svg>
            </NavIcons>
            <Omnibox>
              <svg width="14" height="14" viewBox="0 0 14 14"><circle cx="7" cy="7" r="6.200" fill="none" stroke="#55585c" strokeWidth="1.500" /><path d="M7 6V10.500M7 3.500V5" stroke="#55585c" strokeWidth="1.600" /></svg>
              <Url><b>localhost</b>{":5601/app/kibana#/visualize/create?type=pie&indexPattern=git&_g=()&_a=(filters:!(),linked:!f,query:(language:lucene,query:''),uiState:(),vis:(aggs:!((enabled:!t,id:'1',params:(),schema:metric,type:count),(enabled:!t,id:'2',params:…"}</Url>
              <svg width="15" height="15" viewBox="0 0 15 15"><path d="M7.500 1.300 9.300 5.500 13.900 5.900 10.400 8.900 11.500 13.400 7.500 11 3.500 13.400 4.600 8.900 1.100 5.900 5.700 5.500Z" fill="none" stroke="#55585c" strokeWidth="1.400" /></svg>
            </Omnibox>
            <Extensions>
              <svg width="16" height="16" viewBox="0 0 16 16"><circle cx="8" cy="8" r="8" fill="#11c8a0" /><path d="M11 4.800A4.200 4.200 0 1 0 12.200 8.800H8.800M12 9V11.500" fill="none" stroke="#fff" strokeWidth="1.400" /></svg>
              <svg width="15" height="16" viewBox="0 0 15 16"><path d="M0 0H15V12L11 16H0Z" fill="#58595b" /><path d="M5.500 9Q3.800 7 4.500 5 5.500 3 7.500 3T10.500 5Q11.200 7 9.500 9V12.500H5.500Z" fill="none" stroke="#fff" strokeWidth="1.300" /></svg>
              <svg width="16" height="16" viewBox="0 0 16 16"><path d="M0 5 8 0 16 5V15.500H0Z" fill="#62c677" /><path d="M2 3.500H14V9L8 12 2 9Z" fill="#f1f1f4" /><path d="M4.500 6 6.500 8 9 4.500M8 8 11.500 4.500" stroke="#6b58cf" fill="none" strokeWidth="1.300" /></svg>
              <Bar />
              <svg width="20" height="22" viewBox="0 0 20 22"><circle cx="10" cy="11" r="10" fill="#d6d6d4" /><path d="M10 13V21.500M7 21 10 17 14 21" stroke="#84b956" strokeWidth="1.300" fill="none" /><circle cx="10" cy="11" r="4" fill="none" stroke="#fff" strokeWidth="3.600" strokeDasharray="2 1.100" /><circle cx="10" cy="11" r="2" fill="#f5cf3a" /></svg>
              <svg width="4" height="16" viewBox="0 0 4 16" fill="#55585c"><circle cx="2" cy="3" r="1.600" /><circle cx="2" cy="8" r="1.600" /><circle cx="2" cy="13" r="1.600" /></svg>
            </Extensions>
          </Toolbar>
          <Kibana>
            <Rail>
              <Logo><Owl /></Logo>
              {RAIL.map((icon, i) => <RailItem key={i} $active={i === 1}>{icon}</RailItem>)}
              <RailFoot><svg width="18" height="18" viewBox="0 0 18 18"><circle cx="9" cy="9" r="9" fill="#fff" /><path d="M6.500 4.500 13 9 6.500 13.500Z" fill="#333" /></svg></RailFoot>
            </Rail>
            <Page>
              <Notice>
                <Pill $w={20}>5</Pill>
                <Alert><svg width="15" height="14" viewBox="0 0 15 14"><path d="M7.500 .8 14.300 13.300H.7Z" fill="#fff" stroke="#fff" strokeLinejoin="round" /><path d="M7.500 4.500V9M7.500 10V12" stroke="#a80000" strokeWidth="1.800" /></svg></Alert>
                <NoticeText>Pie chart response converter: Splitting charts without splitting slices is not supported. Pretending that we are just splitting slices.</NoticeText>
                <OkButton>OK</OkButton><Pill $w={41}>277s</Pill>
              </Notice>
              <Menu><Brand>Grimoire</Brand><MenuItems>{MENU.map((m) => <span key={m}>{m}</span>)}</MenuItems></Menu>
              <Crumbs>
                <Link>Visualize</Link><Slash>/</Slash><span>New Visualization (unsaved)</span>
                <Actions>
                  <Action>Save</Action><Action>Share</Action><Action>Refresh</Action>
                  <svg width="49" height="14" viewBox="0 0 49 14" fill="none" stroke="#2d2d2d"><path d="M8.500 2 3.500 7 8.500 12" strokeWidth="2.800" /><circle cx="38" cy="7" r="5" strokeWidth="1.900" /><path d="M38.500 4V7.500H35.500" strokeWidth="1.300" /></svg>
                  <span>Last 1 year</span>
                  <svg width="32" height="14" viewBox="0 0 32 14" fill="none" stroke="#2d2d2d"><path d="M23.500 2 28.500 7 23.500 12" strokeWidth="2.800" /></svg>
                </Actions>
              </Crumbs>
              <SearchRow>
                <SearchBox><span>Search... (e.g. status:200 AND extension:PHP)</span><Link>Uses lucene query syntax</Link></SearchBox>
                <SearchButton><svg width="14" height="14" viewBox="0 0 14 14" fill="none" stroke="#fff"><circle cx="6" cy="6" r="4.600" strokeWidth="2" /><path d="M9.200 9.200 13 13" strokeWidth="2.600" /></svg></SearchButton>
              </SearchRow>
              <FilterBar>Add a filter<svg width="10" height="10" viewBox="0 0 10 10"><path d="M5 0V10M0 5H10" stroke="#0079a5" strokeWidth="2.800" /></svg></FilterBar>
              <Work>
                <Editor>
                  <IndexName>git</IndexName>
                  <EditorTabs>
                    <EditorTab $active>Data</EditorTab><EditorTab>Options</EditorTab>
                    <TabButton $primary><Caret d="right" w={11} h={12} c="#fff" /></TabButton>
                    <TabButton><FatCross s={10} c="#7b7b7b" /></TabButton>
                  </EditorTabs>
                  <Card $h={84}>
                    <CardTitle>Metrics</CardTitle>
                    <AggRow><Expander $w={22}><Caret d="right" w={4} h={7} c="#fff" /></Expander><AggName>Slice Size</AggName><AggValue>Count</AggValue></AggRow>
                  </Card>
                  <Card $h={420}>
                    <CardTitle>Buckets</CardTitle>
                    <AggRow>
                      <Expander $w={23}><Caret w={7} h={4} c="#fff" /></Expander><AggName>Split Chart</AggName>
                      <MiniButton $w={30}><svg width="15" height="10" viewBox="0 0 15 10"><rect x=".6" y=".6" width="13.800" height="8.800" rx="4.400" fill="#2d2d2d" stroke="#2d2d2d" /><circle cx="10" cy="5" r="3.800" fill="#fff" /></svg></MiniButton>
                      <MiniButton $w={27} $danger><FatCross s={9} c="#a30000" /></MiniButton>
                    </AggRow>
                    <Chips><Chip>Rows</Chip><Chip>Columns</Chip></Chips>
                    <FieldLabel $top={15}>Aggregation</FieldLabel>
                    <Control><span>Date Histogram</span><Caret /></Control>
                    <FieldLabel $top={17}>Field</FieldLabel>
                    <Control><span>grimoire_creation_date</span><Caret /></Control>
                    <FieldLabel $top={17}>Interval</FieldLabel>
                    <Control $native><span>Auto</span><Caret w={6} h={6} /></Control>
                    <FieldLabel $top={15}>Custom Label</FieldLabel>
                    <Control />
                    <Advanced><Caret d="left" w={4} h={7} c="#0079a5" />Advanced</Advanced>
                    <SubButton>Add sub-buckets</SubButton>
                  </Card>
                </Editor>
                <Gutter><CircleArrow /></Gutter>
                <Canvas>
                  <ChartArea><Donut /></ChartArea>
                  <LegendToggle><CircleArrow turn={180} /></LegendToggle>
                  <Legend>{LEGEND.map(([day, color]) => <LegendRow key={day} $color={color}>{day}</LegendRow>)}</Legend>
                  <Scrollbar>
                    <ScrollArrow><Caret d="up" w={7} h={4} c="#a3a3a3" /></ScrollArrow>
                    <Thumb />
                    <ScrollArrow $end><Caret w={7} h={4} c="#505050" /></ScrollArrow>
                  </Scrollbar>
                  <SpyToggle><CircleArrow turn={90} /></SpyToggle>
                </Canvas>
              </Work>
            </Page>
          </Kibana>
        </Browser>
      </Body>
    </Desktop>
  );
}
